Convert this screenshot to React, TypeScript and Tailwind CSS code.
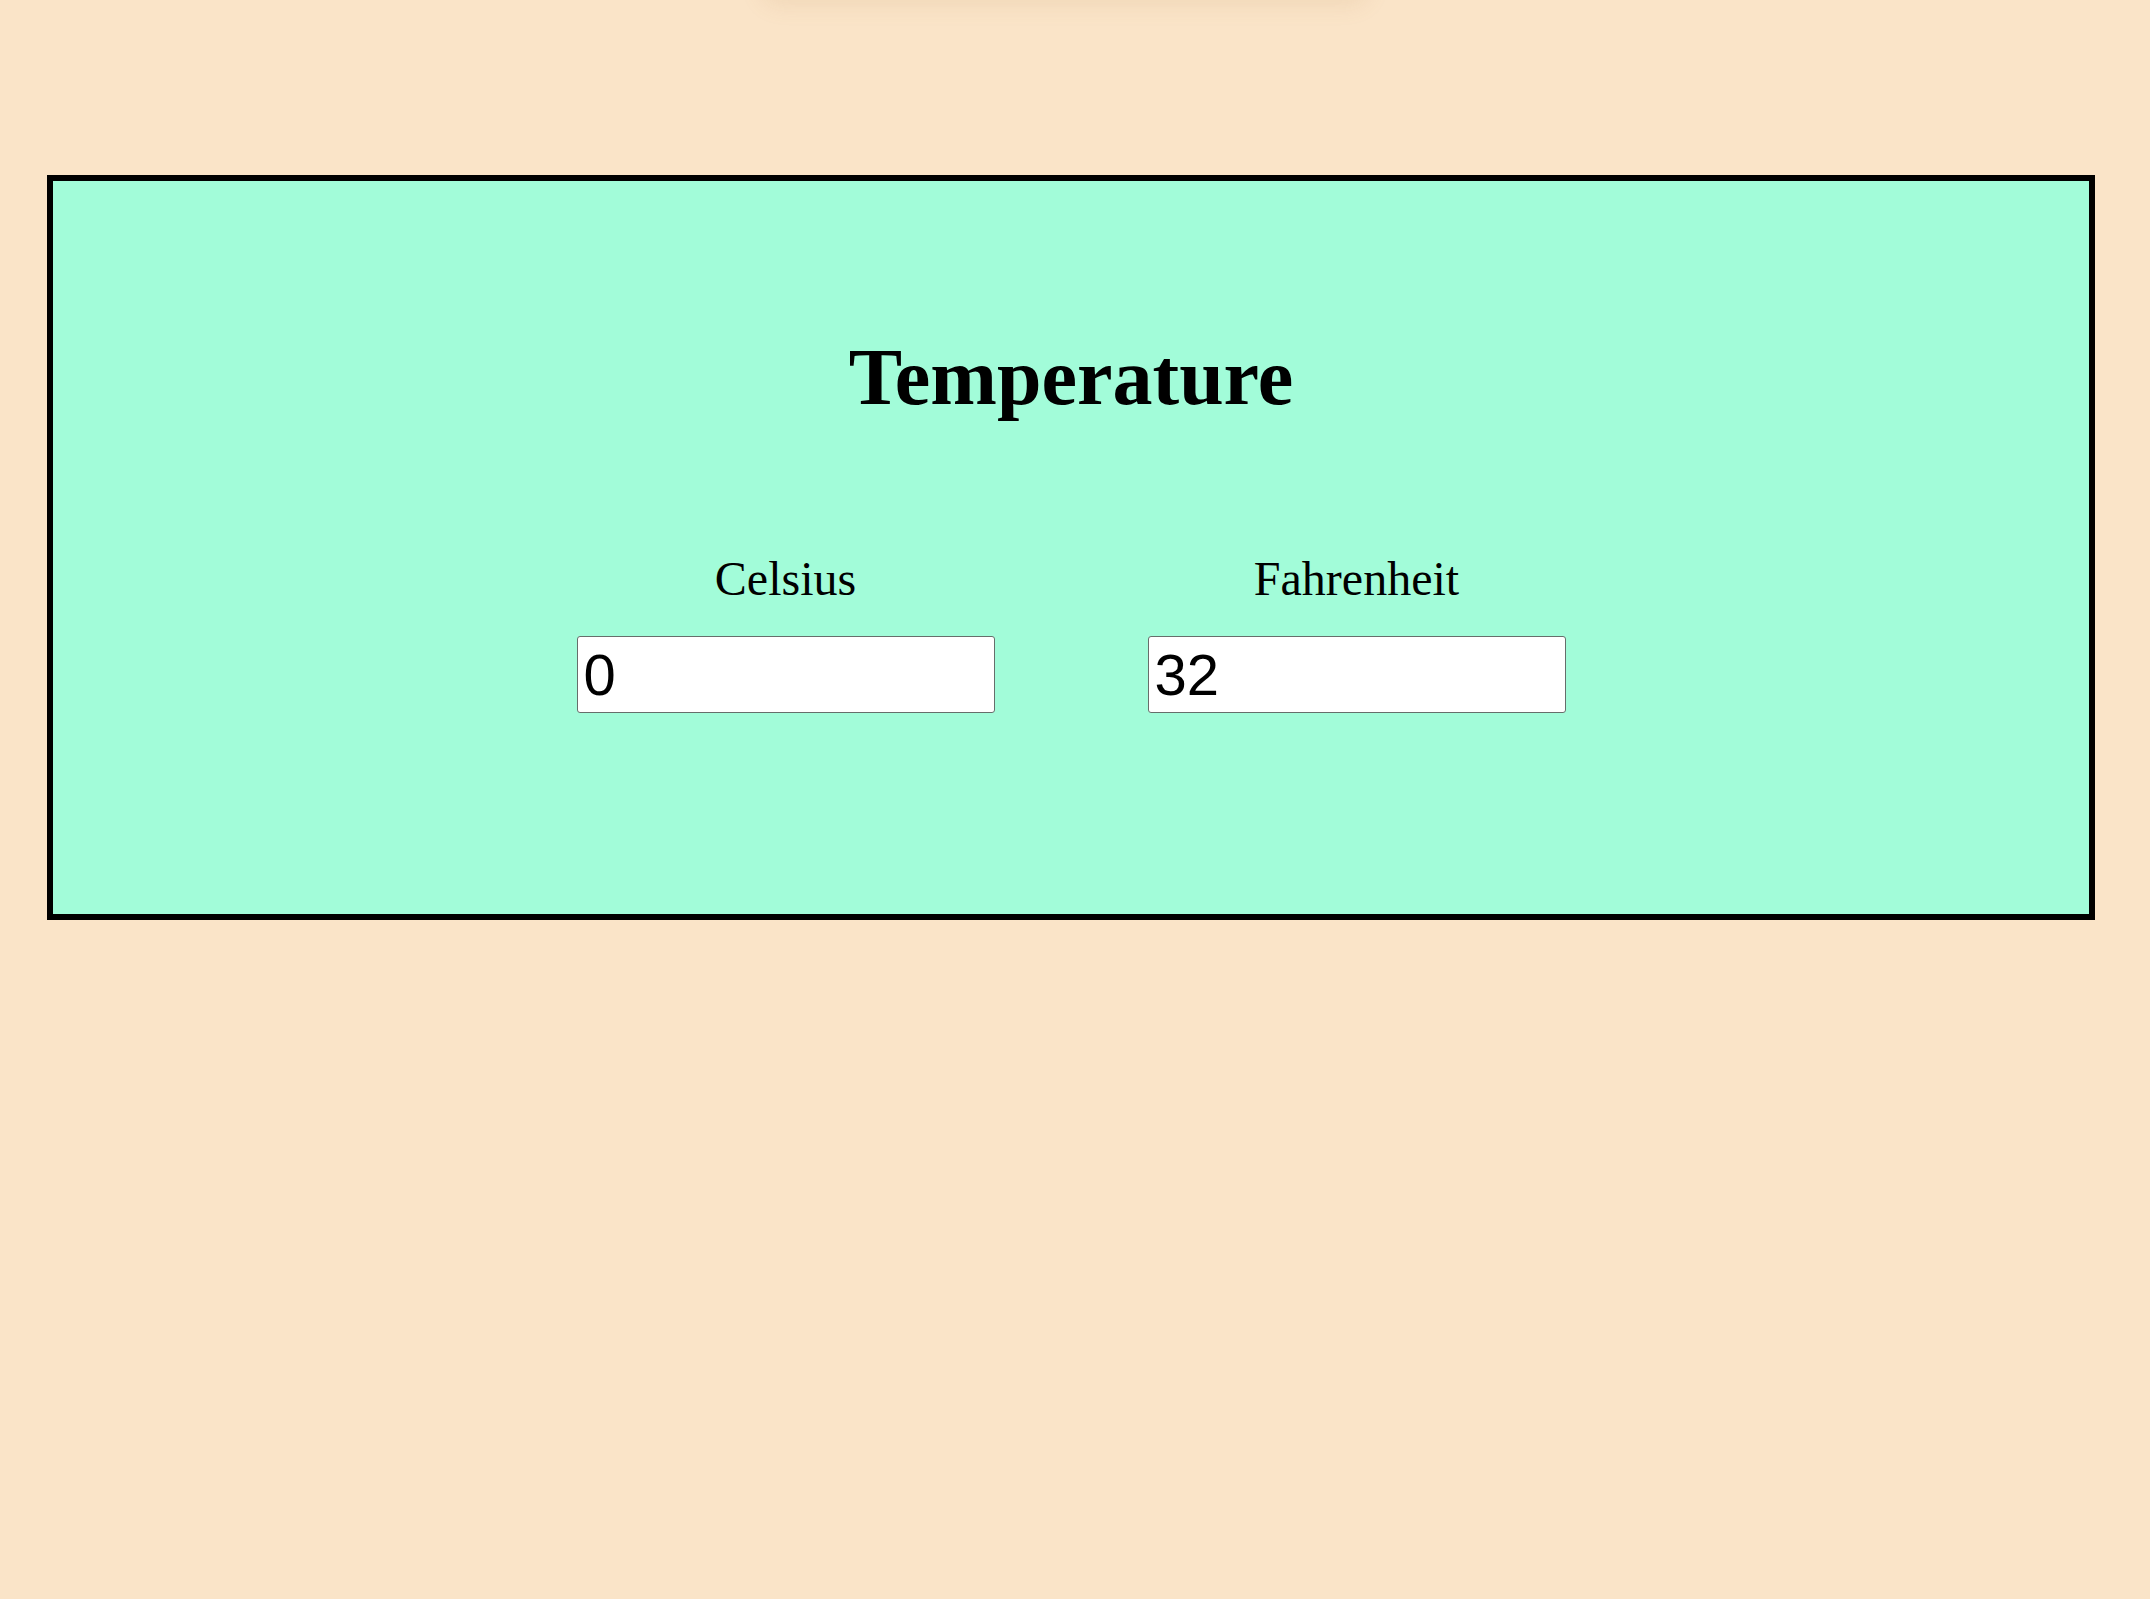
import React, { useState } from 'react';

const App = () => {
  const [celsius, setCelsius] = useState('0');
  const [fahrenheit, setFahrenheit] = useState('32');

  const onCelsius = (v: string) => {
    setCelsius(v);
    const n = parseFloat(v);
    setFahrenheit(isNaN(n) ? '' : String(Math.round((n * 9 / 5 + 32) * 1000) / 1000));
  };

  const onFahrenheit = (v: string) => {
    setFahrenheit(v);
    const n = parseFloat(v);
    setCelsius(isNaN(n) ? '' : String(Math.round(((n - 32) * 5 / 9) * 1000) / 1000));
  };

  return (
    <div className="relative min-h-screen overflow-hidden bg-[#fae4c8] px-[47px] pt-[175px] font-['Liberation_Serif',serif] text-black">
      {/* faint shadow from something just above the viewport */}
      <div className="absolute left-[760px] top-[-40px] h-[40px] w-[610px] rounded-full shadow-[0_6px_22px_rgba(180,130,70,0.12)]" />

      <div className="flex h-[745px] w-[2048px] flex-col items-center border-[6px] border-black bg-[#a2fcd9]">
        <h1 className="mt-[156px] text-[80px] font-bold leading-none">Temperature</h1>

        <div className="mt-[138px] flex gap-[153px]">
          <div className="flex w-[418px] flex-col items-center">
            <label htmlFor="celsius" className="text-[48px] leading-none">Celsius</label>
            <input
              id="celsius"
              value={celsius}
              onChange={(e) => onCelsius(e.target.value)}
              className="mt-[33px] h-[77px] w-[418px] rounded-[3px] border-[1.5px] border-[#666e6b] bg-white px-[6px] font-['Liberation_Sans',Arial,sans-serif] text-[58px] leading-none outline-none"
            />
          </div>
          <div className="flex w-[418px] flex-col items-center">
            <label htmlFor="fahrenheit" className="text-[48px] leading-none">Fahrenheit</label>
            <input
              id="fahrenheit"
              value={fahrenheit}
              onChange={(e) => onFahrenheit(e.target.value)}
              className="mt-[33px] h-[77px] w-[418px] rounded-[3px] border-[1.5px] border-[#666e6b] bg-white px-[6px] font-['Liberation_Sans',Arial,sans-serif] text-[58px] leading-none outline-none"
            />
          </div>
        </div>
      </div>
    </div>
  );
};

export default App;
